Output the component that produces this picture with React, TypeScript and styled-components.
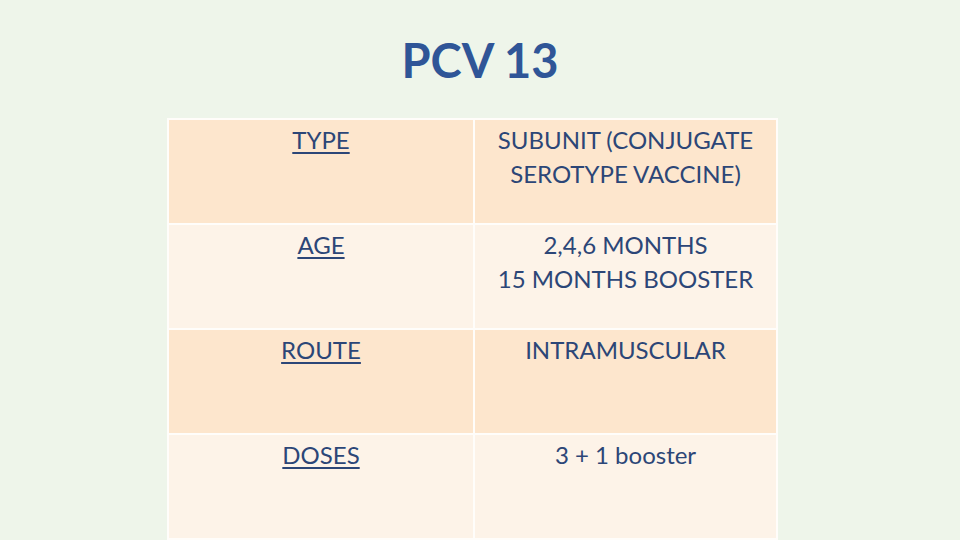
import * as React from 'react';
import styled, { createGlobalStyle } from 'styled-components';

const GlobalStyle = createGlobalStyle`
    * {
        box-sizing: border-box;
    }

    body {
        margin: 0;
        background: #eef5ea;
        font-family: Lato, 'Open Sans', sans-serif;
    }
`;

const Slide = styled.div`
    width: 960px;
    height: 540px;
    overflow: hidden;
    display: flex;
    flex-direction: column;
`;

const Title = styled.h1`
    margin: 0;
    height: 119px;
    padding-top: 30px;
    text-align: center;
    font-size: 47px;
    line-height: 60px;
    font-weight: 700;
    color: #2f5597;
`;

const Table = styled.div`
    margin-left: 167px;
    width: 611px;
    display: grid;
    grid-template-columns: 304px 1fr;
    grid-auto-rows: 103px;
    gap: 2px;
    padding: 2px;
    background: #fffdfa;
`;

const Cell = styled.div<{ $shade: boolean; $label?: boolean }>`
    background: ${p => (p.$shade ? '#fde6cd' : '#fdf3e8')};
    color: #2c4677;
    text-align: center;
    font-size: 24px;
    line-height: 34px;
    padding-top: 3px;
    text-decoration: ${p => (p.$label ? 'underline' : 'none')};
    text-decoration-thickness: 2px;
    text-underline-offset: 3px;
`;

const rows: { label: string; value: string[] }[] = [
    { label: 'TYPE', value: ['SUBUNIT (CONJUGATE', 'SEROTYPE VACCINE)'] },
    { label: 'AGE', value: ['2,4,6 MONTHS', '15 MONTHS BOOSTER'] },
    { label: 'ROUTE', value: ['INTRAMUSCULAR'] },
    { label: 'DOSES', value: ['3 + 1 booster'] },
];

export default function App() {
    return <>
        <GlobalStyle />
        <Slide>
            <Title>PCV 13</Title>
            <Table>
                {rows.map((row, i) => (
                    <React.Fragment key={row.label}>
                        <Cell $shade={i % 2 === 0} $label>{row.label}</Cell>
                        <Cell $shade={i % 2 === 0}>
                            {row.value.map(line => <div key={line}>{line}</div>)}
                        </Cell>
                    </React.Fragment>
                ))}
            </Table>
        </Slide>
    </>;
}
